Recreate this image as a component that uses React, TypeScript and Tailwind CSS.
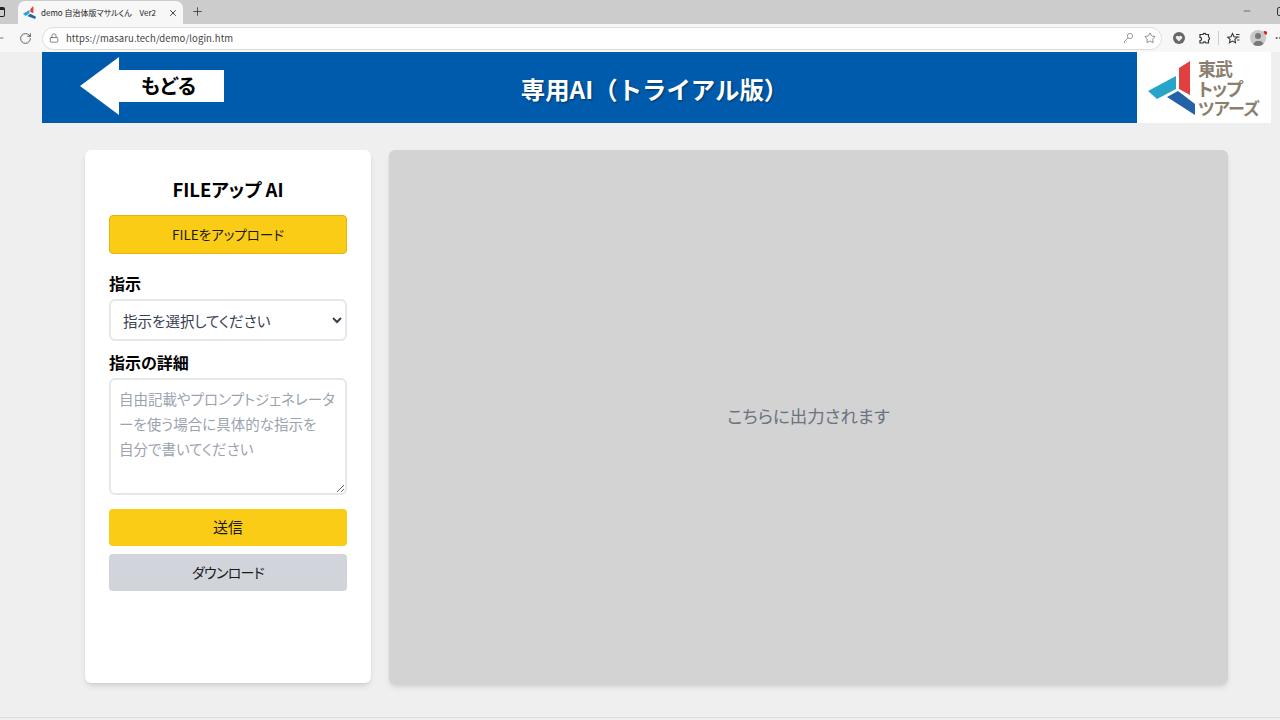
import { ArrowLeft, Ellipsis, Lock, Minus, Plus, RotateCw, Star, X } from 'lucide-react'

function FaviconMark({ size }: { size: number }) {
  return (
    <svg width={size} height={size} viewBox="0 0 60 60">
      <polygon points="34,14 48,0 48,34 34,28" fill="#e04040" />
      <polygon points="0,36 30,18 30,34 12,46" fill="#27a5c9" />
      <polygon points="20,46 34,36 60,50 56,60" fill="#2462a8" />
    </svg>
  )
}

function TabStrip() {
  return (
    <div className="flex h-[24px] items-end bg-[#cccccc]">
      <div className="-ml-[6px] mb-[7px] h-[10px] w-[11px] rounded-[2px] border-[1.5px] border-t-[3px] border-[#222]" />
      <div className="ml-[13px] flex h-[23px] w-[165px] items-center rounded-t-[7px] bg-[#f7f7f7] pl-[5px] pr-[5px]">
        <FaviconMark size={13} />
        <span className="ml-[5px] whitespace-pre text-[8px] text-[#222]">demo 自治体版マサルくん　Ver2</span>
        <X size={10} strokeWidth={2} className="ml-auto text-[#222]" />
      </div>
      <Plus size={13} strokeWidth={1.5} className="mb-[6px] ml-[8px] text-[#333]" />
      <Minus size={10} strokeWidth={1.5} className="mb-[8px] ml-auto text-[#333]" />
      <div className="mb-[8px] ml-[25px] -mr-[6px] h-[9px] w-[9px] rounded-[2px] border border-[#333]" />
    </div>
  )
}

function ToolBar() {
  return (
    <div className="flex h-[28px] items-center bg-[#f7f7f7] text-[#555]">
      <ArrowLeft size={14} strokeWidth={1.5} className="-ml-[8px] text-[#666]" />
      <RotateCw size={13} strokeWidth={1.5} className="ml-[13px] text-[#444]" />
      <div className="ml-[10px] flex h-[23px] w-[1122px] items-center rounded-full border border-[#dddddd] bg-white pl-[6px] pr-[5px]">
        <Lock size={10} strokeWidth={1.5} className="text-[#444]" />
        <span className="ml-[7px] text-[9.5px] tracking-[0.1px] text-[#444]">https://masaru.tech/demo/login.htm</span>
        <svg width="12" height="12" viewBox="0 0 12 12" className="ml-auto text-[#999]" fill="none" stroke="currentColor">
          <circle cx="8" cy="4" r="2.6" />
          <path d="M6 6 2 10l1 1M3.5 8.5l1 1" />
        </svg>
        <Star size={12} strokeWidth={1.2} className="ml-[10px] text-[#444]" />
      </div>
      <svg width="12" height="12" viewBox="0 0 12 12" className="ml-[11px]">
        <circle cx="6" cy="6" r="6" fill="#666" />
        <path d="M6 9.5 2.8 6.2a1.8 1.8 0 0 1 3.2-1.6 1.8 1.8 0 0 1 3.2 1.6Z" fill="#eee" />
      </svg>
      <svg width="13" height="13" viewBox="0 0 13 13" fill="none" stroke="#333" strokeWidth="1.2" className="ml-[13px]">
        <path d="M5 2.5a1.6 1.6 0 0 1 3 0h2.5V5a1.6 1.6 0 0 1 0 3v3H8a1.6 1.6 0 0 0-3 0H2V8.5a1.6 1.6 0 0 0 0-3.2V2.5Z" />
      </svg>
      <div className="ml-[7px] h-[14px] w-px bg-[#cccccc]" />
      <svg width="13" height="13" viewBox="0 0 13 13" fill="none" stroke="#333" strokeWidth="1.1" className="ml-[8px]">
        <path d="M5.5 1.5 7 4.7l3.3.4-2.4 2.3.6 3.3-3-1.6-3 1.6.6-3.3L.7 5.1 4 4.7ZM9 2.5h3.5M10 5h2.5M10 8h2.5" />
      </svg>
      <div className="relative ml-[10px] flex h-[16px] w-[16px] items-end justify-center overflow-hidden rounded-full bg-[#c9c9c9]">
        <div className="absolute top-[3px] h-[6px] w-[6px] rounded-full bg-[#777]" />
        <div className="h-[5px] w-[11px] rounded-t-full bg-[#777]" />
      </div>
      <div className="-ml-[3px] -mt-[10px] h-[4px] w-[4px] rounded-full bg-[#e01010]" />
      <Ellipsis size={12} className="ml-[7px] -mr-[6px] text-[#444]" />
    </div>
  )
}

function BackArrow() {
  return (
    <div className="relative mb-[3px] ml-[38px] h-[58px] w-[144px]">
      <svg width="144" height="58" viewBox="0 0 144 58">
        <polygon points="0,29 39,0 39,13 144,13 144,45 39,45 39,58" fill="#ffffff" />
      </svg>
      <span className="absolute left-[61px] top-[14px] text-[20px] font-bold leading-[30px] text-black">もどる</span>
    </div>
  )
}

function Logo() {
  return (
    <div className="flex h-[71px] w-[134px] items-start bg-white pl-[10px]">
      <svg width="50" height="56" viewBox="0 0 50 56" className="mt-[8px] shrink-0">
        <polygon points="32,8 43,1 43,35 32,29" fill="#e04040" />
        <polygon points="1,31 29,16 29,29 10,39" fill="#27a5c9" />
        <polygon points="20,37 31,31 48,44 48,55" fill="#2462a8" />
      </svg>
      <div className="ml-[1px] mt-[6px] flex flex-col text-[18px] font-bold leading-[20px] tracking-[-1px] text-[#8b7f70]">
        <span>東武</span>
        <span>トップ</span>
        <span className="whitespace-nowrap text-[17px] tracking-[-0.5px]">ツアーズ</span>
      </div>
    </div>
  )
}

function Sidebar() {
  return (
    <div className="flex h-[533px] w-[286px] flex-col rounded-[6px] bg-white px-[24px] shadow-md">
      <h2 className="mt-[24px] text-center text-[18.5px] font-bold leading-[30px] text-black">FILEアップ AI</h2>
      <button className="mt-[11px] h-[39px] rounded-[4px] border border-[#eab308] bg-[#facc15] text-[13.5px] font-normal text-[#1a1a1a]">
        FILEをアップロード
      </button>
      <label className="mt-[17px] text-[16px] font-bold leading-[24px] text-black">指示</label>
      <select className="mt-[4px] h-[42px] rounded-[6px] border-2 border-[#e5e7eb] bg-white pl-[8px] text-[14.5px] text-[#374151]">
        <option>指示を選択してください</option>
      </select>
      <label className="mt-[9px] text-[16px] font-bold leading-[24px] text-black">指示の詳細</label>
      <textarea
        className="mt-[4px] h-[117px] rounded-[6px] border-2 border-[#e5e7eb] px-[8px] py-[6px] text-[14.5px] leading-[25px] placeholder:text-[#9ca3af]"
        placeholder={'自由記載やプロンプトジェネレータ\nーを使う場合に具体的な指示を\n自分で書いてください'}
      />
      <button className="mt-[14px] h-[37px] rounded-[4px] bg-[#facc15] text-[15px] text-[#1a1a1a]">送信</button>
      <button className="mt-[8px] h-[37px] rounded-[4px] bg-[#d1d5db] text-[14px] tracking-[-0.7px] text-[#1a1a1a]">ダウンロード</button>
    </div>
  )
}

export default function App() {
  return (
    <div className="flex h-[720px] w-[1280px] flex-col overflow-hidden bg-[#efefef] [font-family:'Noto_Sans_CJK_JP','Noto_Sans',sans-serif] [font-feature-settings:'palt']">
      <TabStrip />
      <ToolBar />
      <div className="ml-[42px] flex h-[71px] w-[1229px] items-center bg-[#005bac]">
        <BackArrow />
        <h1 className="mt-[4px] flex-1 pr-[52px] text-center text-[24.4px] font-bold text-white [font-feature-settings:normal] [text-shadow:1px_1px_2px_rgba(0,0,0,0.4)]">
          専用AI（トライアル版）
        </h1>
        <Logo />
      </div>
      <div className="mt-[27px] flex h-[534px] gap-[18px] pl-[85px]">
        <Sidebar />
        <div className="flex h-[534px] w-[839px] items-center justify-center rounded-[6px] bg-[#d3d3d3] pb-[1px] shadow-md">
          <p className="text-[17.5px] text-[#6b7280]">こちらに出力されます</p>
        </div>
      </div>
      <div className="mt-[33px] border-t border-[#dddddd]" />
    </div>
  )
}
